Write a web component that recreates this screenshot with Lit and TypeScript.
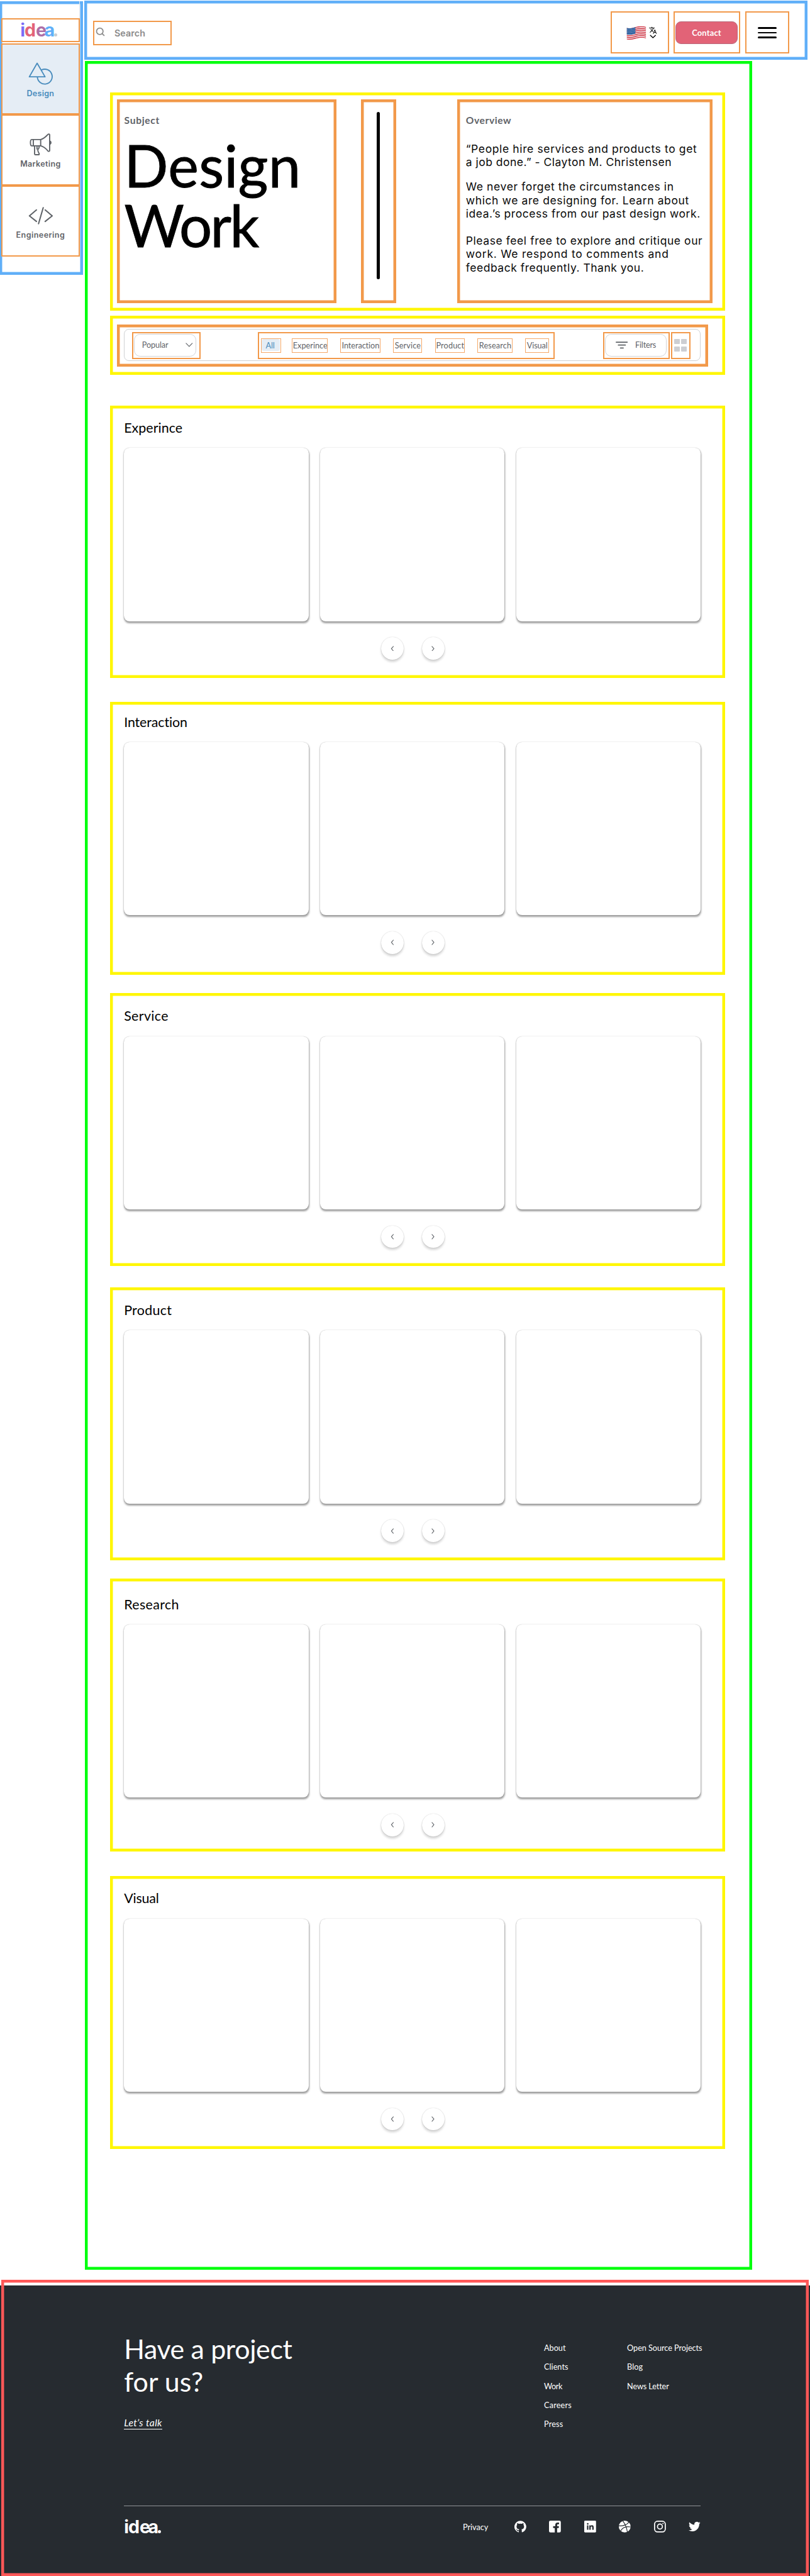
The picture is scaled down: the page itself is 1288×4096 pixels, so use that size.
import { LitElement, html, css, svg } from "lit";
import { customElement, property, query } from "lit/decorators.js";
import { classMap } from "lit/directives/class-map.js";

/** A single line of text, tracked so that it spans exactly `width` pixels. */
@customElement("fit-text")
class FitText extends LitElement {
  @property() text = "";
  @property({ type: Number }) width = 0;
  @query(".line") line!: HTMLElement;

  static styles = css`
    :host { display: block; white-space: nowrap; flex: none; }
    .line { display: inline-block; text-decoration: inherit; }
  `;

  updated() {
    this.track();
    document.fonts.ready.then(() => this.track());
  }

  private track() {
    this.style.width = `${this.width}px`;
    this.line.style.letterSpacing = "0px";
    const host = this.getBoundingClientRect().width;
    const natural = this.line.getBoundingClientRect().width;
    if (!host || !this.text.length) return;
    const missing = ((host - natural) / host) * this.width;
    this.line.style.letterSpacing = `${missing / this.text.length}px`;
  }

  render() {
    return html`<span class="line">${this.text}</span>`;
  }
}

const fit = (text: string, width: number) =>
  html`<fit-text .text=${text} .width=${width}></fit-text>`;

const designIcon = svg`<svg class="icon" viewBox="0 0 44 42" width="44" height="42" fill="none" stroke="currentColor" stroke-width="2.1" stroke-linejoin="round">
  <path d="M15.7 2.8 L29.8 27 H1.8 Z"/><path d="M23.6 14.7 A13.2 13.2 0 1 1 16.1 27.6"/></svg>`;

const marketingIcon = svg`<svg class="icon" viewBox="0 0 44 42" width="44" height="42" fill="none" stroke="currentColor" stroke-width="2.1" stroke-linejoin="round" stroke-linecap="round">
  <path d="M6 12.1H22V23.4H6C4.600 23.400 3.800 21.500 3.800 17.750S4.600 12.100 6 12.100Z"/><path d="M8.900 12.100V23.400"/>
  <path d="M22 12.100C28 10.800 32 6 35 3C36 2.200 38 2.200 38 4V31.500C38 33.300 36 33.600 35 32.500C32 29 28 24.600 22 23.400"/>
  <path d="M38.200 14.800C41 15.500 41 20 38.200 20.700Z" fill="currentColor"/>
  <path d="M11.200 23.600V37.800C11.200 38.900 12 39.200 12.800 39.200H18.200C19.800 39.200 19.600 37.800 19 36.700C17.400 33.600 15.600 31 17.800 28.800C19.500 27.500 19.300 25.500 19 23.600"/>
  <path d="M15.500 24.500V29"/></svg>`;

const codeIcon = svg`<svg class="icon" viewBox="0 0 44 42" width="44" height="42" fill="none" stroke="currentColor" stroke-width="2.300" stroke-linejoin="round" stroke-linecap="round">
  <path d="M14.500 11L2 21.500L14.500 31.500M30 11L42.500 21.500L30 31.500M26.500 7L18.200 35.500"/></svg>`;

const navItems = [
  { label: "Design", width: 49, icon: designIcon, active: true },
  { label: "Marketing", width: 72, icon: marketingIcon, active: false },
  { label: "Engineering", width: 87, icon: codeIcon, active: false },
];

const tabs = [
  { label: "All", before: 5, box: 36, pad: 7, width: 16, active: true },
  { label: "Experince", before: 19, box: 63.5, pad: 0.5, width: 61.5 },
  { label: "Interaction", before: 22.5, box: 72, pad: 1.5, width: 67 },
  { label: "Service", before: 21.8, box: 51.9, pad: 2, width: 46 },
  { label: "Product", before: 23, box: 53.3, pad: 0.5, width: 50 },
  { label: "Research", before: 21.5, box: 63.5, pad: 2, width: 57.5 },
  { label: "Visual", before: 22, box: 42, pad: 1.5, width: 37 },
];

const sections = [
  { title: "Experince", width: 104, before: 55, pad: 24.7 },
  { title: "Interaction", width: 113, before: 42, pad: 20.7 },
  { title: "Service", width: 79, before: 33, pad: 25.7 },
  { title: "Product", width: 85, before: 38, pad: 25.7 },
  { title: "Research", width: 98, before: 33, pad: 30.7 },
  { title: "Visual", width: 62, before: 44, pad: 24.7 },
];

const overview: [string, number][][] = [
  [["“People hire services and products to get", 411], ["a job done.” - Clayton M. Christensen", 366]],
  [["We never forget the circumstances in", 370], ["which we are designing for. Learn about", 397], ["idea.’s process from our past design work.", 417]],
  [["Please feel free to explore and critique our", 421], ["work. We respond to comments and", 361], ["feedback frequently. Thank you.", 317]],
];

const companyLinks: [string, number][] = [["About", 38.5], ["Clients", 43], ["Work", 32.5], ["Careers", 49], ["Press", 34]];
const resourceLinks: [string, number][] = [["Open Source Projects", 133.5], ["Blog", 28], ["News Letter", 74]];

const flag = svg`<svg viewBox="0 0 36 26" width="36" height="26">
  <defs><clipPath id="wave"><path d="M.8 3.600C8 5.500 12 3.500 18 1.800C25 0 30 .4 35 2V22.500C29 20.800 25 21 18 22.800C11 24.800 6 26 .8 24Z"/></clipPath></defs>
  <g clip-path="url(#wave)"><rect width="36" height="26" fill="#f4f1f1"/>
  <g fill="none" stroke="#d33646" stroke-width="1.650">
    ${[0, 1, 2, 3, 4, 5, 6].map((i) => svg`<path d=${`M0 ${4.300 + i * 3.180}C8 ${6.300 + i * 3.180} 12 ${4.300 + i * 3.180} 18 ${2.600 + i * 3.180}C25 ${0.800 + i * 3.180} 30 ${1.200 + i * 3.180} 36 ${3 + i * 3.180}`}/>`)}
  </g>
  <path d="M0 3.300C7 5.500 11 3.700 16 2.300V13.900C11 15.300 7 16.500 0 15Z" fill="#2f62a0"/>
  <path d="M1.500 6.500C7 7.500 11 6 15.500 4.700M1.500 9.300C7 10.300 11 8.800 15.500 7.500M1.500 12.100C7 13.100 11 11.600 15.500 10.300" fill="none" stroke="#b9cbe2" stroke-width="1" stroke-dasharray="1 1.500"/></g></svg>`;

const socials = [
  svg`<svg viewBox="0 0 24 24" width="21" height="21"><path fill="#fff" d="M12 .3a12 12 0 0 0-3.800 23.400c.6.1.8-.3.8-.6v-2c-3.300.7-4-1.600-4-1.600-.6-1.400-1.400-1.800-1.400-1.800-1-.7.1-.7.1-.7 1.200 0 1.900 1.200 1.900 1.200 1 1.800 2.800 1.300 3.500 1 0-.8.4-1.300.7-1.600-2.700-.3-5.500-1.300-5.500-6 0-1.200.5-2.300 1.300-3.100-.2-.4-.6-1.600 0-3.200 0 0 1-.3 3.400 1.200a11.500 11.500 0 0 1 6 0c2.300-1.500 3.300-1.200 3.300-1.200.6 1.600.2 2.800 0 3.200.9.8 1.300 1.900 1.300 3.200 0 4.600-2.800 5.600-5.500 5.900.5.4.9 1 .9 2.200v3.300c0 .3.1.7.8.6A12 12 0 0 0 12 .3"/></svg>`,
  svg`<svg viewBox="0 0 24 24" width="21" height="21"><path fill="#fff" d="M3 0h18a3 3 0 0 1 3 3v18a3 3 0 0 1-3 3h-4.500v-9h3.200l.5-3.700h-3.700V9c0-1.100.4-1.800 1.900-1.800h2V3.900c-.4-.1-1.500-.2-2.900-.2-2.900 0-4.800 1.700-4.800 4.900v2.700H8.400V15h3.300v9H3a3 3 0 0 1-3-3V3a3 3 0 0 1 3-3"/></svg>`,
  svg`<svg viewBox="0 0 24 24" width="21" height="21"><rect width="24" height="24" rx="1.800" fill="#fff"/><g fill="#262b30"><circle cx="7.100" cy="6.500" r="1.700"/><path d="M5.600 9.600h2.900v9H5.600zM10.300 9.600h2.800v1.300c.5-.9 1.500-1.500 2.700-1.500 2.600 0 3.400 1.500 3.400 4.200v5h-2.900v-4.500c0-1.300-.3-2.200-1.500-2.200-1.200 0-1.600.9-1.600 2.200v4.500h-2.900z"/></g></svg>`,
  svg`<svg viewBox="0 0 24 24" width="21" height="21"><circle cx="12" cy="12" r="12" fill="#fff"/><g fill="none" stroke="#262b30" stroke-width="1.500"><path d="M8 .5C12 5.500 16 13 17.300 23"/><path d="M0 10.700C8 10.800 16 9.500 20.300 3"/><path d="M3.800 20.800C7.500 14 14 10.800 24 12.800"/></g></svg>`,
  svg`<svg viewBox="0 0 24 24" width="21" height="21" fill="none" stroke="#fff" stroke-width="2.200"><rect x="1.100" y="1.100" width="21.800" height="21.800" rx="6"/><circle cx="12" cy="12" r="5"/><circle cx="18.300" cy="5.700" r="1.300" fill="#fff" stroke="none"/></svg>`,
  svg`<svg viewBox="0 0 24 24" width="21" height="21"><path fill="#fff" d="M23.950 4.570a10 10 0 0 1-2.820.77 4.960 4.960 0 0 0 2.160-2.720c-.95.55-2 .95-3.130 1.180a4.920 4.920 0 0 0-8.380 4.480C7.690 8.100 4.070 6.130 1.640 3.160a4.820 4.820 0 0 0-.67 2.480c0 1.710.87 3.210 2.190 4.100a4.900 4.900 0 0 1-2.230-.62v.06a4.920 4.920 0 0 0 3.950 4.830 5 5 0 0 1-2.210.08 4.940 4.940 0 0 0 4.600 3.420A9.870 9.870 0 0 1 0 19.540a14 14 0 0 0 7.550 2.210c9.050 0 14-7.500 14-13.980 0-.21 0-.42-.02-.63a9.940 9.940 0 0 0 2.460-2.550z"/></svg>`,
];

@customElement("app-root")
class AppRoot extends LitElement {
  static styles = css`
    :host { display: block; overflow: hidden; height: 4096px; background: #fff; }
    * { box-sizing: border-box; }
    svg { display: block; flex: none; }
    .page { zoom: 0.8943; width: 1440.3px; height: 4580.5px; display: flex; flex-direction: column; font-family: Lato, "Open Sans", sans-serif; color: #5f6368; }
    .top { display: flex; height: 4053px; flex: none; }
    .blue { box-shadow: inset 0 0 0 5px #60aff8; }
    .green { box-shadow: inset 0 0 0 5px #00ff0d; }
    .yellow { box-shadow: inset 0 0 0 5px #fff600; }
    .thick { box-shadow: inset 0 0 0 5px #f2994a; }
    .thin { outline: 2.3px solid #f2994a; outline-offset: -2.3px; }
    .hair { outline: 1.2px solid #f5a868; outline-offset: -1.2px; }

    .sidebar { width: 149px; height: 487px; margin: 2px 2px 0 -1px; flex: none; padding-left: 3px; display: flex; flex-direction: column; }
    .rail { width: 140px; height: 30px; border-right: 1.2px solid #e8eaed; flex: none; }
    .brand { width: 140px; height: 42.5px; flex: none; padding: 0 0 0 34px; margin-bottom: 2.5px; display: flex; align-items: center; }
    .logo { font: 700 32px/40px Inter, sans-serif; display: flex; }
    .logo .i { color: #7a6cf6; margin-right: -1px; }
    .logo .d { color: #e36378; }
    .logo .e { color: #ae6ea6; margin-right: -4px; }
    .logo .a { color: #60aff8; margin-right: -2.5px; }
    .logo .dot { width: 5.600px; height: 5.600px; border-radius: 50%; background: #c8ccd3; align-self: flex-end; margin: 0 0 8.2px 1px; }
    .logo.mono span { color: #fff; }
    .logo.mono .dot { background: #fff; }
    .nav { width: 140px; height: 126.300px; flex: none; display: flex; flex-direction: column; align-items: center; padding-top: 32.500px; font: 600 14px/18px Inter, sans-serif; }
    .nav .icon { margin-bottom: 5.700px; }
    .nav.active { background: #e5edf5; color: #498cbd; }

    .column { display: flex; flex-direction: column; }
    .header { width: 1286px; height: 105.500px; margin-top: 1px; flex: none; display: flex; align-items: flex-start; padding: 19px 33px 0 15px; }
    .search { width: 140px; height: 44px; margin-top: 17px; display: flex; align-items: center; padding: 0 0 0 5.500px; color: #8b8b8b; font: 600 16px/20px Inter, sans-serif; }
    .search svg { margin: -4px 16px 0 0; }
    .grow { flex: 1; }
    .lang { width: 104px; height: 75px; display: flex; align-items: flex-start; padding: 26px 0 0 27.500px; }
    .lang .stack { margin: 1.500px 0 0 5px; }
    .cta { width: 119px; height: 75px; margin-left: 7px; padding: 18px 0 0 4px; }
    .button { width: 110.500px; height: 40.500px; border-radius: 10px; background: #e26377; border: 1.200px solid #b9697a; color: #fff; font-weight: 700; font-size: 14.500px; display: flex; align-items: center; justify-content: center; }
    .menu { width: 78px; height: 75px; margin-left: 9px; padding: 28.500px 0 0 22px; display: flex; flex-direction: column; gap: 5.300px; }
    .menu i { width: 34px; height: 3px; border-radius: 2px; background: #000; }

    .main { width: 1186px; height: 3927px; margin: 2.500px 0 0 1px; padding: 55px 0 0 44.400px; display: flex; flex-direction: column; flex: none; }
    .hero { width: 1093.600px; height: 388.700px; flex: none; display: flex; padding: 13px 0 0 12.100px; }
    .subject { width: 390.400px; height: 361.500px; padding: 27.700px 0 0 13.500px; }
    .caption { font-size: 17.500px; line-height: 20px; font-weight: 700; }
    .headline { margin: 15.300px 0 0; font-size: 103px; line-height: 106.300px; font-weight: 400; color: #000; -webkit-text-stroke: 1px #000; }
    .rule { width: 62.600px; height: 361.500px; margin-left: 44.100px; padding: 22px 0 0 28px; }
    .rule i { display: block; width: 5px; height: 298px; border-radius: 3px; background: #000; }
    .overview { width: 454px; height: 361.500px; margin-left: 108.300px; padding: 27.700px 0 0 15.500px; }
    .copy { font: 400 19.600px/24px Inter, sans-serif; color: #0a0a0a; margin: 27.900px 0 0; }
    .copy + .copy { margin-top: 19.500px; }
    .copy + .copy + .copy { margin-top: 23.700px; }

    .filters { width: 1093.600px; height: 105px; margin-top: 8.300px; flex: none; padding: 16px 0 0 12.100px; }
    .frame { width: 1051.500px; height: 75px; padding: 8px 13.300px; }
    .bar { width: 1025px; height: 56.500px; border: 1.200px solid #d0d1d3; border-radius: 9px; display: flex; align-items: flex-start; padding: 4px 0 0 13px; font-size: 14.200px; line-height: 20px; }
    .slot { height: 48.500px; flex: none; }
    .pill { height: 39.500px; border: 1.200px solid #d3d4d6; border-radius: 11px; display: flex; align-items: center; }
    .popular { width: 122.300px; padding: 4px 0 0 3.500px; }
    .popular .pill { width: 110.500px; padding-left: 13px; gap: 31px; }
    .tabs { width: 527px; margin-left: 101.700px; display: flex; align-items: flex-start; padding-top: 11px; }
    .tab { height: 26px; flex: none; display: flex; align-items: center; }
    .tab .inner { height: 21px; border-radius: 4px; display: flex; align-items: center; padding-top: 1px; margin-left: 1.500px; }
    .tab.active .inner { background: #e5edf5; color: #498cbd; width: 32.500px; margin-top: -1.500px; padding-top: 2.500px; }
    .filter { width: 118.800px; margin-left: 86px; padding: 4px 0 0 3.500px; }
    .filter .pill { width: 110px; padding-left: 18px; gap: 13px; }
    .grid { width: 34.500px; margin-left: 2.200px; padding: 12.300px 0 0 6px; display: grid; grid-template-columns: 9.400px 9.400px; grid-auto-rows: 9.400px; gap: 4px 3.100px; }
    .grid i { background: #cdced2; border-radius: 1px; }

    .section { width: 1093.600px; height: 485px; flex: none; padding-left: 25.100px; }
    .title { margin: 0 0 20.700px; font-size: 24px; line-height: 30px; font-weight: 400; color: #000; }
    .cards { display: grid; grid-template-columns: repeat(3, 328px); gap: 20.700px; }
    .card { height: 308px; border-radius: 10px; background: #fff; box-shadow: 0 0 1.500px rgba(0, 0, 0, 0.3), 1px 3px 3px rgba(0, 0, 0, 0.36); }
    .pager { display: flex; gap: 32.500px; padding: 28.600px 0 0 457.400px; }
    .round { width: 40px; height: 40px; border-radius: 50%; background: #fff; box-shadow: 0 0 1.500px rgba(0, 0, 0, 0.25), 0 4px 4px rgba(0, 0, 0, 0.16); display: flex; align-items: center; justify-content: center; }

    .footer { flex: 1; background: linear-gradient(#fff 10px, #262b30 10px); padding: 0 2.500px 0 2px; color: #fff; }
    .box { height: 100%; box-shadow: inset 0 0 0 5px #ff5757; padding: 0 192px 0 218.500px; }
    .upper { height: 402px; display: flex; }
    .pitch { width: 746.800px; flex: none; padding-top: 94.100px; }
    .ask { margin: 0; font-size: 48px; line-height: 58.700px; font-weight: 400; }
    .talk { display: inline-block; margin-top: 34.200px; font-size: 17.500px; line-height: 20px; font-style: italic; color: #fff; border-bottom: 1.300px solid #fff; }
    .links { width: 147.700px; padding-top: 104.600px; font-size: 14.200px; line-height: 33.900px; flex: none; }
    .lower { height: 74px; border-top: 1.200px solid #909395; display: flex; align-items: center; font-size: 14.200px; }
    .social { display: flex; gap: 41.100px; margin-left: 46.500px; }
  `;

  private logo(mono = false) {
    return html`<div class=${classMap({ logo: true, mono })}>
      <span class="i">i</span><span class="d">d</span><span class="e">e</span><span class="a">a</span><i class="dot" role="img" aria-label="."></i>
    </div>`;
  }

  private chevron(points: string, w: number, h: number, color: string, stroke: number) {
    return svg`<svg width=${w} height=${h} viewBox="0 0 ${w} ${h}" fill="none" stroke=${color} stroke-width=${stroke} stroke-linecap="round" stroke-linejoin="round"><path d=${points}/></svg>`;
  }

  render() {
    return html`<div class="page">
      <div class="top">
        <nav class="sidebar blue">
          <div class="rail"></div>
          <div class="brand thin">${this.logo()}</div>
          ${navItems.map((n) => html`<div class=${classMap({ nav: true, thin: true, active: n.active })}>${n.icon}${fit(n.label, n.width)}</div>`)}
        </nav>
        <div class="column">
          <header class="header blue">
            <div class="search thin">
              <svg width="17" height="17" viewBox="0 0 17 17" fill="none" stroke="#8b8b8b" stroke-width="2"><circle cx="7.500" cy="7.500" r="5.800"/><path d="M11.500 11.500L15.600 15.600"/></svg>
              ${fit("Search", 55)}
            </div>
            <div class="grow"></div>
            <div class="lang thin">${flag}
              <div class="stack">
                <svg width="14" height="14" viewBox="0.500 1 23 22"><path d="M12.870 15.070l-2.540-2.510.03-.03c1.740-1.940 2.980-4.170 3.710-6.530H17V4h-7V2H8v2H1v1.990h11.170C11.500 7.920 10.440 9.750 9 11.350 8.070 10.320 7.300 9.190 6.690 8h-2c.73 1.630 1.730 3.170 2.980 4.560l-5.090 5.020L4 19l5-5 3.110 3.110.76-2.040zM18.500 10h-2L12 22h2l1.120-3h4.750L21 22h2l-4.500-12zm-2.620 7l1.620-4.330L19.120 17h-3.240z"/></svg>
                ${this.chevron("M2.500 1.500L7 5.500L11.500 1.500", 14, 7, "#000", 1.6)}
              </div>
            </div>
            <div class="cta thin"><div class="button">${fit("Contact", 52)}</div></div>
            <div class="menu thin"><i></i><i></i><i></i></div>
          </header>
          <main class="main green">
            <section class="hero yellow">
              <div class="subject thick">
                <div class="caption">${fit("Subject", 63)}</div>
                <h1 class="headline">${fit("Design", 314)}${fit("Work", 237)}</h1>
              </div>
              <div class="rule thick"><i></i></div>
              <div class="overview thick">
                <div class="caption">${fit("Overview", 81)}</div>
                ${overview.map((p) => html`<div class="copy">${p.map(([t, w]) => fit(t, w))}</div>`)}
              </div>
            </section>
            <section class="filters yellow">
              <div class="frame thick"><div class="bar">
                <div class="slot popular thin"><div class="pill">${fit("Popular", 46.5)}${this.chevron("M1 1L6.500 6.500L12 1", 13, 8, "#5f6368", 1.3)}</div></div>
                <div class="slot tabs thin">
                  ${tabs.map((t) => html`<div class=${classMap({ tab: true, hair: true, active: !!t.active })} style="width:${t.box}px;margin-left:${t.before}px">
                    <div class="inner" style="padding-left:${t.pad}px">${fit(t.label, t.width)}</div></div>`)}
                </div>
                <div class="slot filter thin"><div class="pill">
                  <svg width="22" height="13" viewBox="0 0 22 13" fill="none" stroke="#5f6368" stroke-width="2" stroke-linecap="round"><path d="M1 1.200H21M4.800 6.400H17.200M8.500 11.500H13.500"/></svg>
                  ${fit("Filters", 37)}</div></div>
                <div class="slot grid thin"><i></i><i></i><i></i><i></i></div>
              </div></div>
            </section>
            ${sections.map((s) => html`<section class="section yellow" style="margin-top:${s.before}px;padding-top:${s.pad}px">
              <h2 class="title">${fit(s.title, s.width)}</h2>
              <div class="cards"><div class="card"></div><div class="card"></div><div class="card"></div></div>
              <div class="pager">
                <div class="round">${this.chevron("M5 1L1.500 5L5 9", 6, 10, "#5f6368", 1.2)}</div>
                <div class="round">${this.chevron("M1 1L4.500 5L1 9", 6, 10, "#5f6368", 1.2)}</div>
              </div>
            </section>`)}
          </main>
        </div>
      </div>
      <footer class="footer"><div class="box">
        <div class="upper">
          <div class="pitch">
            <h2 class="ask">${fit("Have a project", 299)}${fit("for us?", 141)}</h2>
            <a class="talk">${fit("Let’s talk", 68)}</a>
          </div>
          <div class="links">${companyLinks.map(([t, w]) => fit(t, w))}</div>
          <div class="links">${resourceLinks.map(([t, w]) => fit(t, w))}</div>
        </div>
        <div class="lower">
          ${this.logo(true)}
          <div class="grow"></div>
          ${fit("Privacy", 45)}
          <div class="social">${socials}</div>
        </div>
      </div></footer>
    </div>`;
  }
}
